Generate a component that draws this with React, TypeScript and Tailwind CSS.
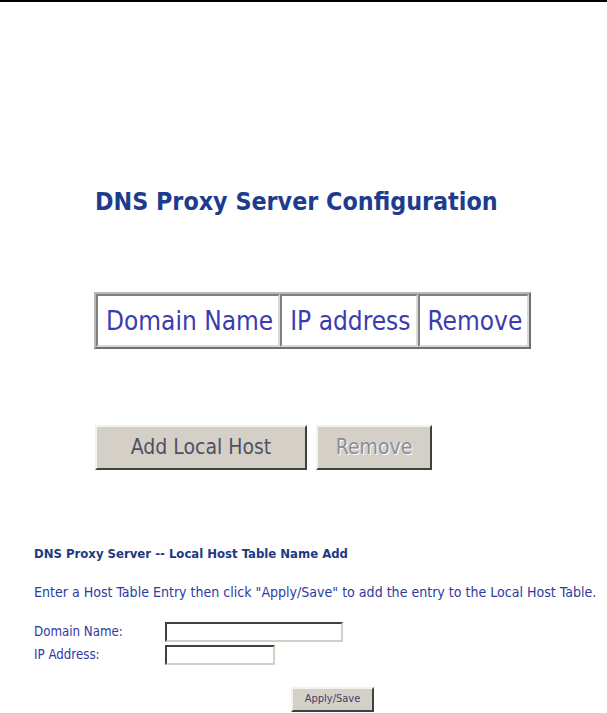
export default function App() {
  const font = { fontFamily: '"DejaVu Sans Condensed", "DejaVu Sans", sans-serif' };
  return (
    <div
      className="w-[607px] h-[713px] bg-white border-t-2 border-black overflow-hidden"
      style={font}
    >
      <h1 className="mt-[183px] ml-[95px] text-[24.8px] font-bold text-[#1e3c8e] leading-[34px]">
        DNS Proxy Server Configuration
      </h1>

      <table className="mt-[73px] ml-[94px] border-2 border-t-[#b8b8b8] border-l-[#b8b8b8] border-b-[#707070] border-r-[#707070] border-separate border-spacing-0 text-[26px] text-[#3c3cae]">
        <tbody>
          <tr>
            {["Domain Name", "IP address", "Remove"].map((h) => (
              <td
                key={h}
                className="border-2 border-t-[#808080] border-l-[#808080] border-b-[#d8d8d8] border-r-[#d8d8d8] pl-[8px] pr-[5px] h-[53px] leading-[30px]"
              >
                {h}
              </td>
            ))}
          </tr>
        </tbody>
      </table>

      <div className="mt-[76px] ml-[95px] flex gap-[9px]">
        <button className="w-[212px] h-[45px] bg-[#d4d0c8] border-2 border-t-[#f4f2ee] border-l-[#f4f2ee] border-b-[#404040] border-r-[#404040] text-[21px] text-[#505060]">
          Add Local Host
        </button>
        <button className="w-[116px] h-[45px] bg-[#d4d0c8] border-2 border-t-[#f4f2ee] border-l-[#f4f2ee] border-b-[#404040] border-r-[#404040] text-[21px] text-[#8c8c98] [text-shadow:1px_1px_0_#ffffff]">
          Remove
        </button>
      </div>

      <div className="mt-[76px] ml-[34px] text-[#2f3aa0]">
        <div className="font-bold text-[#1c3a82] text-[13px] leading-[16px]">
          DNS Proxy Server -- Local Host Table Name Add
        </div>
        <p className="mt-[22px] text-[14.05px] leading-[17px]">
          Enter a Host Table Entry then click "Apply/Save" to add the entry to the Local Host Table.
        </p>
        <div className="mt-[21px] flex flex-col gap-[3px] text-[13.2px]">
          <div className="flex items-center">
            <label className="w-[131px]">Domain Name:</label>
            <input className="w-[178px] h-[20px] border-2 border-t-[#404040] border-l-[#404040] border-b-[#d4d0c8] border-r-[#d4d0c8] bg-white" />
          </div>
          <div className="flex items-center">
            <label className="w-[131px]">IP Address:</label>
            <input className="w-[110px] h-[20px] border-2 border-t-[#404040] border-l-[#404040] border-b-[#d4d0c8] border-r-[#d4d0c8] bg-white" />
          </div>
        </div>
        <div className="mt-[20px] ml-[257px]">
          <button className="w-[83px] h-[25px] bg-[#d4d0c8] border-2 border-t-[#f4f2ee] border-l-[#f4f2ee] border-b-[#404040] border-r-[#404040] text-[11px] text-[#40406a]">
            Apply/Save
          </button>
        </div>
      </div>
    </div>
  );
}
